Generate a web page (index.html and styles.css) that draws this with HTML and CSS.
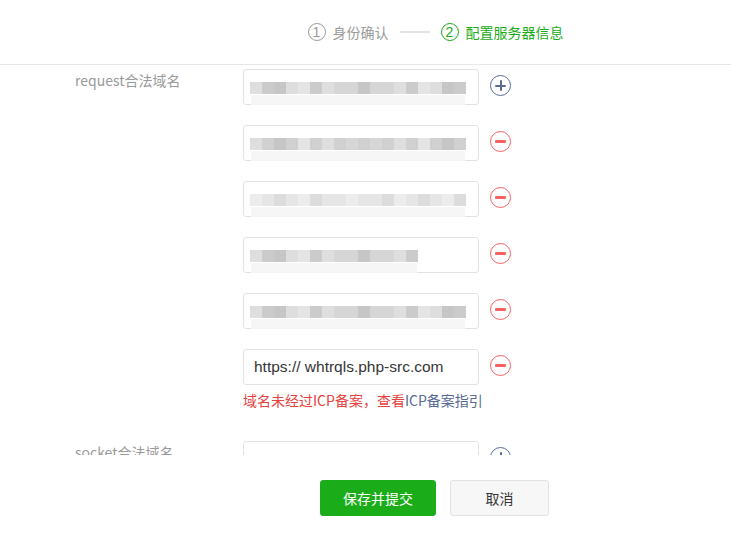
FILE: index.html
```html
<!doctype html>
<html lang="zh-CN">
    <head>
        <meta charset="UTF-8" />
        <meta name="viewport" content="width=device-width, initial-scale=1.0" />
        <title>配置服务器信息</title>
        <link rel="stylesheet" href="styles.css">
    </head>
    <body>
        <div class="steps">
            <div class="step">
                <span class="step-num">1</span>
                <span class="step-text">身份确认</span>
            </div>
            <span class="step-line"></span>
            <div class="step current">
                <span class="step-num">2</span>
                <span class="step-text">配置服务器信息</span>
            </div>
        </div>

        <div class="form">
            <div class="field">
                <label class="field-label">request合法域名</label>
                <div class="field-list">
                    <div class="domain-row">
                        <div class="domain-input">
                            <div class="mosaic"><span></span><span></span><span></span><span></span><span></span><span></span><span></span><span></span><span></span><span></span><span></span><span></span><span></span><span></span><span></span><span></span><span></span><span></span></div>
                        </div>
                        <span class="circle-btn add"></span>
                    </div>
                    <div class="domain-row">
                        <div class="domain-input">
                            <div class="mosaic alt"><span></span><span></span><span></span><span></span><span></span><span></span><span></span><span></span><span></span><span></span><span></span><span></span><span></span><span></span><span></span><span></span><span></span><span></span></div>
                        </div>
                        <span class="circle-btn remove"></span>
                    </div>
                    <div class="domain-row">
                        <div class="domain-input">
                            <div class="mosaic light"><span></span><span></span><span></span><span></span><span></span><span></span><span></span><span></span><span></span><span></span><span></span><span></span><span></span><span></span><span></span><span></span><span></span><span></span></div>
                        </div>
                        <span class="circle-btn remove"></span>
                    </div>
                    <div class="domain-row">
                        <div class="domain-input">
                            <div class="mosaic short"><span></span><span></span><span></span><span></span><span></span><span></span><span></span><span></span><span></span><span></span><span></span><span></span><span></span><span></span></div>
                        </div>
                        <span class="circle-btn remove"></span>
                    </div>
                    <div class="domain-row">
                        <div class="domain-input">
                            <div class="mosaic"><span></span><span></span><span></span><span></span><span></span><span></span><span></span><span></span><span></span><span></span><span></span><span></span><span></span><span></span><span></span><span></span><span></span><span></span></div>
                        </div>
                        <span class="circle-btn remove"></span>
                    </div>
                    <div class="domain-row">
                        <div class="domain-input">https:// whtrqls.php-src.com</div>
                        <span class="circle-btn remove"></span>
                    </div>
                    <p class="field-error">域名未经过ICP备案，查看<a href="#">ICP备案指引</a></p>
                </div>
            </div>

            <div class="field">
                <label class="field-label">socket合法域名</label>
                <div class="field-list">
                    <div class="domain-row">
                        <div class="domain-input"></div>
                        <span class="circle-btn add"></span>
                    </div>
                </div>
            </div>
        </div>

        <div class="actions">
            <button class="btn primary">保存并提交</button>
            <button class="btn">取消</button>
        </div>
    </body>
</html>
```

FILE: styles.css
```css
* {
    box-sizing: border-box;
}

body {
    margin: 0;
    font-family: "Noto Sans CJK SC", "Liberation Sans", sans-serif;
    font-size: 14px;
    color: #353535;
    background: white;
}

.steps {
    height: 65px;
    border-bottom: 1px solid #e7e7e7;
    display: flex;
    align-items: center;
    justify-content: center;
    padding-left: 140px;
    padding-bottom: 1px;
}

.step {
    display: flex;
    align-items: center;
    color: #9a9a9a;
}

.step.current {
    color: #1aad19;
}

.step-num {
    width: 18px;
    height: 18px;
    border: 1px solid currentColor;
    border-radius: 50%;
    display: flex;
    align-items: center;
    justify-content: center;
    font-family: "Liberation Sans", sans-serif;
    font-size: 14px;
    margin-right: 7px;
}

.step-line {
    width: 30px;
    height: 2px;
    background: #e2e2e2;
    margin: 0 11px;
}

.form {
    height: 390px;
    overflow: hidden;
    padding-top: 4px;
}

.field {
    display: flex;
    margin-bottom: 30px;
}

.field-label {
    width: 243px;
    padding-left: 75px;
    color: #9a9a9a;
    line-height: 22px;
}

.field-list {
    display: flex;
    flex-direction: column;
    gap: 20px;
}

.domain-row {
    display: flex;
    align-items: center;
}

.domain-input {
    width: 236px;
    height: 36px;
    border: 1px solid #e2e2e2;
    border-radius: 3px;
    padding: 0 10px;
    display: flex;
    align-items: center;
    font-family: "Liberation Sans", sans-serif;
    font-size: 15.5px;
    color: #353535;
}

.mosaic {
    display: flex;
    height: 12px;
    margin: 1px 0 0 -4px;
    box-shadow: 0 12px 0 -1px #f6f6f6;
}

.mosaic span {
    width: 12px;
    background: #d6d6d6;
}

.mosaic span:nth-child(3n+1) { background: #dedede; }
.mosaic span:nth-child(4n+2) { background: #cbcbcb; }
.mosaic span:nth-child(5n) { background: #e4e4e4; }
.mosaic span:nth-child(7n+3) { background: #c6c6c6; }

.mosaic.alt span:nth-child(2n) { background: #d0d0d0; }
.mosaic.light span { background: #e6e6e6; }
.mosaic.light span:nth-child(3n) { background: #dcdcdc; }
.mosaic.light span:nth-child(4n+1) { background: #ececec; }

.circle-btn {
    width: 21px;
    height: 21px;
    border-radius: 50%;
    border: 1px solid;
    margin: 0 0 3px 11px;
    position: relative;
}

.circle-btn:before,
.circle-btn.add:after {
    content: "";
    position: absolute;
    left: 4px;
    right: 4px;
    top: 8px;
    height: 3px;
    border-radius: 1px;
    background: currentColor;
}

.circle-btn.add {
    color: #576b95;
    border-color: #576b95;
}

.circle-btn.add:before {
    height: 2px;
    top: 8.5px;
}

.circle-btn.add:after {
    left: 8.5px;
    right: auto;
    width: 2px;
    top: 4px;
    height: 11px;
}

.circle-btn.remove {
    color: #f76260;
    border-color: #f76260;
}

.field-error {
    margin: -16px 0 0;
    color: #e64340;
    line-height: 22px;
}

.field-error a {
    color: #576b95;
    text-decoration: none;
}

.actions {
    display: flex;
    justify-content: center;
    gap: 14px;
    padding-left: 138px;
    padding-top: 25px;
}

.btn {
    height: 36px;
    min-width: 99px;
    padding: 0 22px;
    border: 1px solid #e2e2e2;
    border-radius: 3px;
    background: #f7f7f7;
    color: #353535;
    font-family: "Noto Sans CJK SC", sans-serif;
    font-size: 14px;
}

.btn.primary {
    width: 116px;
    background: #1aad19;
    border-color: #1aad19;
    color: white;
}
```
